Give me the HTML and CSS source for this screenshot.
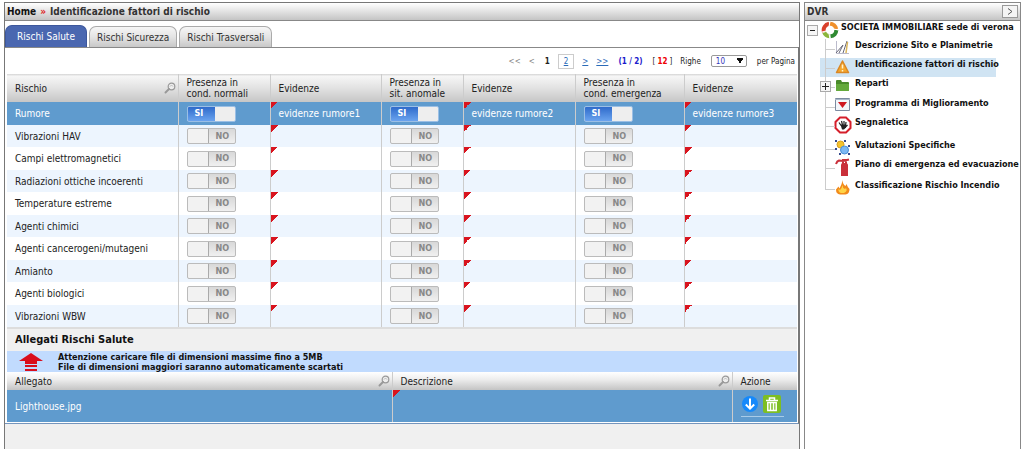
FILE: index.html
```html
<!DOCTYPE html>
<html lang="it">
<head>
<meta charset="utf-8">
<title>Identificazione fattori di rischio</title>
<link rel="stylesheet" href="styles.css">
</head>
<body>
<svg class="defs" aria-hidden="true">
  <symbol id="lens" viewBox="0 0 12 12"><circle cx="7.5" cy="4.5" r="3.3" fill="#eee" stroke="#999" stroke-width="1.2"/><path d="M5 7L1.5 10.5" stroke="#999" stroke-width="2" stroke-linecap="round"/><path d="M6 4.5a1.6 1.6 0 0 1 3 0" fill="none" stroke="#bbb"/></symbol>
</svg>
<div class="page">
<main class="main">
  <nav class="bar crumbs"><a href="#">Home</a><span class="sep">»</span><span>Identificazione fattori di rischio</span></nav>
  <div class="tabs">
    <button class="tab active">Rischi Salute</button>
    <button class="tab">Rischi Sicurezza</button>
    <button class="tab">Rischi Trasversali</button>
  </div>
  <div class="content">
    <div class="pager">
      <span class="off">&lt;&lt;</span><span class="off">&lt;</span><b class="here">1</b><a class="num" href="#">2</a><a href="#">&gt;</a><a href="#">&gt;&gt;</a>
      <b class="pages">(1 / 2)</b><span class="total">[<b>12</b>]</span>
      <label for="rows">Righe</label><select id="rows"><option>10</option></select><span class="per">per Pagina</span>
    </div>
    <table class="grid risks">
      <colgroup><col class="c1"><col class="c2"><col class="c3"><col class="c4"><col class="c5"><col class="c6"><col class="c7"></colgroup>
      <thead><tr>
        <th><div class="head">Rischio<svg class="lens"><use href="#lens"/></svg></div></th>
        <th>Presenza in<br>cond. normali</th><th>Evidenze</th><th>Presenza in<br>sit. anomale</th><th>Evidenze</th><th>Presenza in<br>cond. emergenza</th><th>Evidenze</th>
      </tr></thead>
      <tbody>
        <tr class="selected"><td>Rumore</td><td><label class="switch"><input type="checkbox" checked><span>SI</span></label></td><td class="edit">evidenze rumore1</td><td><label class="switch"><input type="checkbox" checked><span>SI</span></label></td><td class="edit">evidenze rumore2</td><td><label class="switch"><input type="checkbox" checked><span>SI</span></label></td><td class="edit">evidenze rumore3</td></tr>
        <tr><td>Vibrazioni HAV</td><td><label class="switch"><input type="checkbox"><span>NO</span></label></td><td class="edit"></td><td><label class="switch"><input type="checkbox"><span>NO</span></label></td><td class="edit"></td><td><label class="switch"><input type="checkbox"><span>NO</span></label></td><td class="edit"></td></tr>
        <tr><td>Campi elettromagnetici</td><td><label class="switch"><input type="checkbox"><span>NO</span></label></td><td class="edit"></td><td><label class="switch"><input type="checkbox"><span>NO</span></label></td><td class="edit"></td><td><label class="switch"><input type="checkbox"><span>NO</span></label></td><td class="edit"></td></tr>
        <tr><td>Radiazioni ottiche incoerenti</td><td><label class="switch"><input type="checkbox"><span>NO</span></label></td><td class="edit"></td><td><label class="switch"><input type="checkbox"><span>NO</span></label></td><td class="edit"></td><td><label class="switch"><input type="checkbox"><span>NO</span></label></td><td class="edit"></td></tr>
        <tr><td>Temperature estreme</td><td><label class="switch"><input type="checkbox"><span>NO</span></label></td><td class="edit"></td><td><label class="switch"><input type="checkbox"><span>NO</span></label></td><td class="edit"></td><td><label class="switch"><input type="checkbox"><span>NO</span></label></td><td class="edit"></td></tr>
        <tr><td>Agenti chimici</td><td><label class="switch"><input type="checkbox"><span>NO</span></label></td><td class="edit"></td><td><label class="switch"><input type="checkbox"><span>NO</span></label></td><td class="edit"></td><td><label class="switch"><input type="checkbox"><span>NO</span></label></td><td class="edit"></td></tr>
        <tr><td>Agenti cancerogeni/mutageni</td><td><label class="switch"><input type="checkbox"><span>NO</span></label></td><td class="edit"></td><td><label class="switch"><input type="checkbox"><span>NO</span></label></td><td class="edit"></td><td><label class="switch"><input type="checkbox"><span>NO</span></label></td><td class="edit"></td></tr>
        <tr><td>Amianto</td><td><label class="switch"><input type="checkbox"><span>NO</span></label></td><td class="edit"></td><td><label class="switch"><input type="checkbox"><span>NO</span></label></td><td class="edit"></td><td><label class="switch"><input type="checkbox"><span>NO</span></label></td><td class="edit"></td></tr>
        <tr><td>Agenti biologici</td><td><label class="switch"><input type="checkbox"><span>NO</span></label></td><td class="edit"></td><td><label class="switch"><input type="checkbox"><span>NO</span></label></td><td class="edit"></td><td><label class="switch"><input type="checkbox"><span>NO</span></label></td><td class="edit"></td></tr>
        <tr><td>Vibrazioni WBW</td><td><label class="switch"><input type="checkbox"><span>NO</span></label></td><td class="edit"></td><td><label class="switch"><input type="checkbox"><span>NO</span></label></td><td class="edit"></td><td><label class="switch"><input type="checkbox"><span>NO</span></label></td><td class="edit"></td></tr>
      </tbody>
    </table>
    <h2>Allegati Rischi Salute</h2>
    <div class="notice">
      <svg viewBox="0 0 24 20" width="24" height="20"><path d="M12 1L24 9H18V12H6V9H0z" fill="#d90d1c"/><path d="M6 13h12v2H6zM6 17h12v2H6z" fill="#d90d1c"/></svg>
      <p>Attenzione caricare file di dimensioni massime fino a 5MB<br>File di dimensioni maggiori saranno automaticamente scartati</p>
    </div>
    <table class="grid files">
      <colgroup><col class="f1"><col class="f2"><col class="f3"></colgroup>
      <thead><tr>
        <th><div class="head">Allegato<svg class="lens"><use href="#lens"/></svg></div></th>
        <th><div class="head">Descrizione<svg class="lens"><use href="#lens"/></svg></div></th>
        <th>Azione</th>
      </tr></thead>
      <tbody><tr class="selected"><td>Lighthouse.jpg</td><td class="edit"></td><td><div class="actions">
        <button aria-label="Scarica"><svg viewBox="0 0 18 18" width="18" height="18"><circle cx="9" cy="9" r="8" fill="#1689fa"/><path d="M9 3.5v10M4.8 9.5L9 13.7l4.2-4.2" fill="none" stroke="#fff" stroke-width="2"/></svg></button>
        <button aria-label="Elimina"><svg viewBox="0 0 18 18" width="18" height="18"><rect width="18" height="18" rx="2" fill="#7dbe22"/><path d="M3 5.5h12M6.5 5V3h5v2" fill="none" stroke="#fff" stroke-width="1.5"/><path d="M4.8 7.5h8.4v8H4.8zM7.5 8v7M10.5 8v7" fill="none" stroke="#fff" stroke-width="1.5"/></svg></button>
      </div></td></tr></tbody>
    </table>
  </div>
</main>
<aside class="side">
  <div class="bar"><span>DVR</span><button class="collapse" aria-label="Comprimi"><svg viewBox="0 0 14 11" width="14" height="11"><path d="M5 2.5L9 5.5L5 8.5" fill="none" stroke="#555"/></svg></button></div>
  <div class="tree">
    <div class="root">
      <button class="exp" aria-label="Chiudi"><svg viewBox="0 0 9 9" width="9" height="9"><path d="M2 4.5h5" stroke="#222"/></svg></button>
      <svg class="ico" viewBox="0 0 18 18" width="18" height="18"><g fill="none" stroke-width="4"><path d="M3 11A6.3 6.3 0 0 1 8 2.8" stroke="#d9402b"/><path d="M9 2.7A6.3 6.3 0 0 1 15.2 8" stroke="#f0902b"/><path d="M15.3 9A6.3 6.3 0 0 1 9.500 15.3" stroke="#2f8a32"/><path d="M8.500 15.3A6.3 6.3 0 0 1 3.2 11.5" stroke="#8cb63c"/></g><path d="M1 11l4-1M9 1l-1 4M17 9l-4-1M9 17l-1-4" stroke="#fff" fill="none"/></svg>
      <a href="#">SOCIETA IMMOBILIARE sede di verona</a>
    </div>
    <ul>
      <li><svg class="ico" viewBox="0 0 18 18" width="18" height="18"><path d="M2.500 2v12.500H15" fill="none" stroke="#bbc"/><path d="M2 14L9 6L5 14M9 14L13 2" fill="none" stroke="#667"/><path d="M13.500 3L12 14" stroke="#d9b65c" stroke-width="1.5"/></svg><a href="#">Descrizione Sito e Planimetrie</a></li>
      <li class="current"><svg class="ico" viewBox="0 0 18 18" width="18" height="18"><path d="M8.5 3L14.5 14.5H2.5z" fill="#f4a62d" stroke="#d98724" stroke-width="1.5" stroke-linejoin="round"/><path d="M8.5 6.5v4M8.5 12v1.5" stroke="#fff3d0" stroke-width="1.5"/></svg><a href="#">Identificazione fattori di rischio</a></li>
      <li class="parent"><button class="exp" aria-label="Espandi"><svg viewBox="0 0 9 9" width="9" height="9"><path d="M1 4.5h7M4.5 1v7" stroke="#222"/></svg></button><svg class="ico" viewBox="0 0 18 18" width="18" height="18"><path d="M2 4q0-1 1-1h4l1 2h6q1 0 1 1v7q0 1-1 1H3q-1 0-1-1z" fill="#4a8a2b"/><path d="M2 7h13v6q0 1-1 1H3q-1 0-1-1z" fill="#65aa3c"/></svg><a href="#">Reparti</a></li>
      <li><svg class="ico" viewBox="0 0 18 18" width="18" height="18"><path d="M1.5 1.5h14v12h-14z" fill="#f3f6fa" stroke="#7c8ba0"/><path d="M1 2.5h15" stroke="#a9b7c8"/><path d="M4 5h9l-4.5 6z" fill="#ce1820"/></svg><a href="#">Programma di Miglioramento</a></li>
      <li class="tall"><svg class="ico" viewBox="0 0 18 18" width="18" height="18"><path d="M6 1.5h6L16.5 6v6L12 16.5H6L1.500 12V6z" fill="#fff" stroke="#d51f2b" stroke-width="2"/><path d="M5 6.500l2 3M7.500 5l1 4M10 5v4M12 6l-.5 4M13.500 9l-2 2" stroke="#222" stroke-width="1.2"/><path d="M6.500 8.500h5.500v3l-2 2H8z" fill="#222"/></svg><a href="#">Segnaletica</a></li>
      <li><svg class="ico" viewBox="0 0 18 18" width="18" height="18"><circle cx="6.500" cy="5.500" r="3.500" fill="#f6c42c" stroke="#d69e20"/><circle cx="10.500" cy="11" r="4" fill="#7cb8f4" stroke="#4a90d8"/><path d="M1 1h2v2H1zM10 1h2v2h-2zM1 9h2v2H1zM14 6h2v2h-2zM5 14h2v2H5zM14 14h2v2h-2z" fill="#34488c"/></svg><a href="#">Valutazioni Specifiche</a></li>
      <li class="mid"><svg class="ico" viewBox="0 0 18 18" width="18" height="18"><path d="M7 7q0-2 2-2h2q3 0 3 2v11H7z" fill="#c92f3a"/><path d="M9 6V2h3v4M15 1.500L9 3L5 2.500Q3 3 2 6" fill="none" stroke="#c92f3a" stroke-width="2"/></svg><a href="#">Piano di emergenza ed evacuazione</a></li>
      <li><svg class="ico" viewBox="0 0 18 18" width="18" height="18"><path d="M8.500 1q0 4 3 6l1-2q1 3 3 5q0 5-4 5.500H6q-4-.5-4-5l2.500-3l1 2q2.500-4 3-8.500z" fill="#f28a1b"/><path d="M8.500 6q0 3 2.500 4l1-1q2 3-2 5H7q-3-1-2.500-4l1.500 1q2-2 2.500-5z" fill="#ffd447"/></svg><a href="#">Classificazione Rischio Incendio</a></li>
    </ul>
  </div>
</aside>
</div>
</body>
</html>
```
FILE: styles.css
```css
* { box-sizing: border-box; }
body { margin: 0; background: #fff; color: #222; font: 10px/11px "DejaVu Sans Condensed", "DejaVu Sans", sans-serif; }
button, select { font: inherit; color: inherit; }
a { color: inherit; text-decoration: none; }
svg { flex: none; display: block; }
.defs { position: absolute; width: 0; height: 0; }

.page { display: flex; gap: 4px; min-height: 100vh; padding: 2px 3px 0 4px; }
.main { flex: 1; min-width: 0; border: 1px solid #777; border-bottom: 0; background: #f0f0f0; }
.side { flex: none; width: 217px; border: 1px solid #888; border-bottom: 0; }
.bar { display: flex; align-items: center; height: 18px; padding: 0 2px; font-weight: bold; background: linear-gradient(#fff, #eee 30%, #c4c4c4); border-bottom: 1px solid #888; color: #333; }
.crumbs { gap: 4px; }
.crumbs a { color: #111; }
.sep { color: #d22; }
.collapse { display: flex; margin-left: auto; padding: 0; border: 1px solid #999; background: #f4f4f4; }

.tabs { display: flex; gap: 2px; align-items: flex-end; height: 26px; background: #fff; }
.tab { height: 21px; padding: 0 7px; border: 1px solid #aaa; border-bottom: 0; border-radius: 7px 7px 0 0; background: linear-gradient(#f6f6f6, #e4e4e4 50%, #c8c8c8); color: #333; }
.tab.active { height: 22px; padding: 0 11px; background: #4a67b0; border-color: #3d579c; color: #fff; }

.content { padding: 0 1px 1px 2px; background: #fff; border-top: 1px solid #888; border-right: 1px solid #777; border-bottom: 1px solid #7595bd; }
.pager { display: flex; align-items: center; justify-content: flex-end; gap: 8px; height: 26px; padding-right: 2px; font-size: 8px; }
.pager a { color: #2a6ab8; text-decoration: underline; }
.pager .num { padding: 1px 5px; border: 1px solid #ccc; }
.off { color: #888; }
.here { padding-left: 2px; }
.pager .pages { color: #1a1acc; padding: 0 2px; }
.total b { color: #e00; padding: 0 2px; }
.pager select { width: 36px; height: 12px; margin: 0 2px; padding: 0 4px; appearance: none; border: 1px solid #999; border-radius: 2px; color: #33b; background: conic-gradient(from -30deg at 50% 100%, #111 60deg, #fff 0) no-repeat 24px 2px / 8px 6px #fff; }

.grid { width: 100%; table-layout: fixed; border-collapse: collapse; }
.grid th, .grid td { padding: 0 0 0 8px; text-align: left; vertical-align: middle; font-weight: normal; white-space: nowrap; border-left: 1px solid #ccc; }
.grid th:first-child, .grid td:first-child { border-left: 0; }
.grid thead { background: linear-gradient(#d4d4d4, #f6f6f6 8%, #e2e2e2 50%, #c6c6c6); }
.risks th { height: 28px; }
.head { display: flex; align-items: center; justify-content: space-between; padding-right: 2px; }
.lens { width: 12px; height: 12px; }
.c1 { width: 171px; } .c2 { width: 92px; } .c3 { width: 111px; } .c4 { width: 82px; }
.c5 { width: 112px; } .c6 { width: 109px; } .c7 { width: 113px; }
.risks tbody tr:nth-child(odd) { height: 23px; }
.risks tbody tr:nth-child(even) { height: 22px; background: #edf5fe; }
.grid .selected { background: #5f9bce; color: #fff; }
.grid .edit { background: linear-gradient(135deg, #d9141e 50%, transparent 50%) no-repeat 0 0 / 7px 7px; }

.switch { position: relative; display: flex; align-items: center; width: 49px; height: 16px; }
.switch input { appearance: none; position: absolute; inset: 0; margin: 0; border: 1px solid #bbb; border-radius: 2px; background: linear-gradient(90deg, #f2f2f2 20px, #aaa 20px, #aaa 21px, transparent 21px), linear-gradient(#d8d8d8, #f0f0f0); }
.switch input:checked { border-color: #9bbfe5; background: linear-gradient(90deg, transparent 27px, #eee 27px), linear-gradient(#2f6bcb, #6aa3ee); }
.switch span { position: relative; margin-left: 29px; font-size: 9px; font-weight: bold; color: #888; }
.switch input:checked + span { margin-left: 8px; color: #fff; }

h2 { margin: 0; padding-left: 8px; font-size: 11px; line-height: 22px; color: #111; background: #f0f0f0; border-top: 2px solid #ddd; }
.notice { display: flex; align-items: center; gap: 15px; height: 21px; padding-left: 12px; background: #c1dbfe; }
.notice p { margin: 0; font-size: 9px; line-height: 10px; font-weight: bold; color: #111; }
.files thead { background: linear-gradient(#fff, #eee 40%, #c4c4c4); }
.files th { height: 18px; }
.files tbody tr { height: 32px; }
.f1 { width: 385px; } .f2 { width: 340px; } .f3 { width: 65px; }
.actions { display: flex; gap: 4px; width: 43px; padding-bottom: 3px; border-bottom: 1px solid #a8cbe8; }
.actions button { padding: 0; border: 0; background: none; }

.tree { padding: 0 0 8px 2px; font-size: 9px; line-height: 12px; font-weight: bold; color: #111; white-space: nowrap; }
.root { display: flex; height: 18px; }
.root .exp { margin: 4px 3px 0 0; }
.root a { margin-left: 2px; }
.exp { display: flex; flex: none; width: 11px; height: 11px; padding: 0; border: 1px solid #aaa; background: #f6f6f6; }
.tree ul { list-style: none; margin: 0; padding: 0 0 0 13px; }
.tree li { position: relative; display: flex; height: 19px; padding-left: 14px; }
.tree li::before { content: ""; position: absolute; left: 5px; top: 0; width: 9px; height: 10px; border: solid #ccc; border-width: 0 0 1px 1px; }
.tree li:not(:last-child)::after { content: ""; position: absolute; left: 5px; top: 10px; bottom: 0; border-left: 1px solid #ccc; }
.tree li a { margin-left: 3px; }
.tree li.current { width: 176px; background: #d0e4f3; }
.tree li.parent { height: 20px; }
.tree li.tall { height: 23px; }
.tree li.mid { height: 21px; }
.parent .exp { position: absolute; left: 0; top: 4px; z-index: 1; }
```
